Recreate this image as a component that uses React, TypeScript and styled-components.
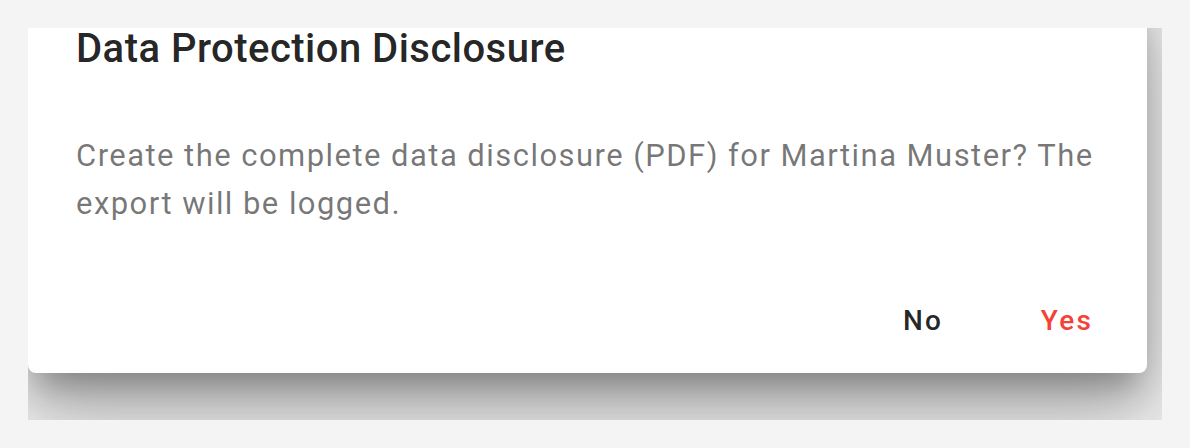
import styled, { createGlobalStyle } from "styled-components";

const GlobalStyle = createGlobalStyle`
  html, body {
    margin: 0;
    padding: 0;
    background: #f4f4f4;
  }
`;

const Frame = styled.div`
  margin: 28px;
  width: 1134px;
  height: 392px;
  overflow: hidden;
  background: #f4f4f4;
`;

const Dialog = styled.div`
  margin-top: -40px;
  width: 1119px;
  background: #ffffff;
  border-radius: 8px;
  box-shadow: 0px 22px 30px -10px rgba(0, 0, 0, 0.3),
    0px 48px 76px 6px rgba(0, 0, 0, 0.16),
    0px 18px 92px 16px rgba(0, 0, 0, 0.14);
  font-family: Roboto, "Liberation Sans", sans-serif;
`;

const Title = styled.h2`
  margin: 0;
  padding: 46px 48px 68px;
  font-size: 40px;
  font-weight: 500;
  line-height: 30px;
  letter-spacing: 0.012em;
  color: rgba(0, 0, 0, 0.87);
`;

const Content = styled.div`
  padding: 0 48px 40px;
`;

const Text = styled.p`
  margin: 0;
  font-size: 31px;
  font-weight: 400;
  line-height: 48px;
  letter-spacing: 1.45px;
  color: rgba(0, 0, 0, 0.54);
`;

const Actions = styled.div`
  display: flex;
  justify-content: flex-end;
  align-items: center;
  gap: 16px;
  padding: 16px;
`;

const Button = styled.button<{ $tone: string }>`
  min-width: 128px;
  padding: 12px 16px;
  border: 0;
  border-radius: 8px;
  background: transparent;
  font-family: Roboto, "Liberation Sans", sans-serif;
  font-size: 28px;
  font-weight: 500;
  line-height: 49px;
  letter-spacing: 0.08em;
  color: ${(p) => p.$tone};
  cursor: pointer;
`;

export default function App() {
  return (
    <>
      <GlobalStyle />
      <Frame>
        <Dialog>
          <Title>Data Protection Disclosure</Title>
          <Content>
            <Text>
              Create the complete data disclosure (PDF) for Martina Muster? The
              export will be logged.
            </Text>
          </Content>
          <Actions>
            <Button $tone="rgba(0, 0, 0, 0.87)">No</Button>
            <Button $tone="#f44336">Yes</Button>
          </Actions>
        </Dialog>
      </Frame>
    </>
  );
}
